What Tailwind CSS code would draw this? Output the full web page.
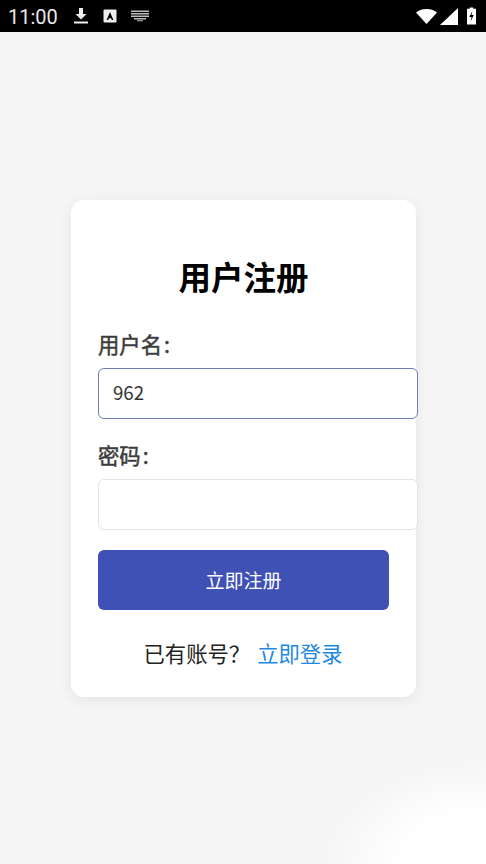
<!DOCTYPE html>
<html lang="zh-CN">
<head>
    <meta charset="UTF-8">
    <meta name="viewport" content="width=device-width, initial-scale=1.0">
    <title>用户注册</title>
    <script src="https://cdn.jsdelivr.net/npm/@tailwindcss/browser@4"></script>
</head>
<body class="font-['Noto_Sans_CJK_SC',sans-serif]">
    <div class="relative w-[486px] h-[864px] overflow-hidden bg-[#f5f5f5] flex flex-col">
        <!-- status bar -->
        <div class="h-8 shrink-0 bg-black flex items-center pl-[8px] pr-[10px] text-white">
            <span class="font-['Roboto',sans-serif] text-[20px] leading-none text-[#e8e8e8] w-[49px] mt-[1px]">11:00</span>
            <svg class="ml-[16px]" width="16" height="18" viewBox="0 0 16 18" fill="#eee"><path d="M6 1h4v6h3.500L8 12.500 2.500 7H6z"/><rect x="1" y="14.500" width="14" height="2"/></svg>
            <svg class="ml-[14px]" width="14" height="14" viewBox="0 0 14 14"><rect x="0.500" y="0.500" width="13" height="13" rx="1" fill="#eee"/><path d="M7 3 L10.400 11 H8.800 L8.100 9.200 H5.900 L5.200 11 H3.600 Z" fill="#000"/></svg>
            <svg class="ml-[14px]" width="18" height="12" viewBox="0 0 18 12" fill="#bbb"><path d="M0 .5h18v1.500H0zM0 3h18v1.500H0zM0 5.500h18v1.500H0zM3 8h12v1.500H3zM6 10.300h6v1H6z"/></svg>
            <div class="flex-1"></div>
            <svg width="21" height="15" viewBox="0 0 21 15" fill="#fff"><path d="M0 3.500C3 1 6.500 0 10.500 0S18 1 21 3.500L10.500 15z"/></svg>
            <svg class="ml-[3px]" width="18" height="17" viewBox="0 0 18 17" fill="#fff"><path d="M18 0v17H0z"/></svg>
            <svg class="ml-[9px]" width="9" height="18" viewBox="0 0 10 19"><path d="M3 0h4v1.500h3V19H0V1.500h3z" fill="#fff"/><path d="M6 4 2.500 10.500H5L4 15.500 7.500 8.500H5z" fill="#000"/></svg>
        </div>

        <!-- white glow, bottom right -->
        <div class="absolute right-0 bottom-0 w-[165px] h-[105px] bg-[radial-gradient(ellipse_farthest-side_at_100%_100%,#ffffff_50%,#f5f5f5_100%)]"></div>

        <!-- card -->
        <div class="relative z-10 mt-[168px] ml-[71px] w-[345px] h-[497px] bg-white rounded-[13px] shadow-[0_3px_14px_rgba(0,0,0,0.07)] px-[27px] pt-[50px]">
            <h1 class="text-[32.5px] leading-[52px] font-bold text-black text-center">用户注册</h1>
            <label class="block mt-[26px] text-[21.33px] leading-[32px] text-[#3c3c3c] [-webkit-text-stroke:0.5px_#3c3c3c]">用户名<span class="ml-[2px]">:</span></label>
            <input type="text" value="962" class="block mt-[8px] w-[320px] h-[51px] px-[14px] pb-[5px] rounded-[6px] border border-[#6f7fb5] bg-white text-[18.67px] text-[#333] outline-none">
            <label class="block mt-[20px] text-[21.33px] leading-[32px] text-[#3c3c3c] [-webkit-text-stroke:0.5px_#3c3c3c]">密码<span class="ml-[2px]">:</span></label>
            <input type="password" class="block mt-[8px] w-[320px] h-[51px] px-[14px] rounded-[6px] border border-[#e4e4e4] bg-white text-[18.67px] outline-none">
            <button class="block mt-[20px] w-[291px] h-[60px] rounded-[6px] bg-[#3f51b5] text-white text-[19px]">立即注册</button>
            <p class="mt-[24px] pr-[1px] text-center text-[21.33px] leading-[38px] text-[#222]">已有账号？<a class="text-[#1e88e5] ml-[7px]">立即登录</a></p>
        </div>
    </div>
</body>
</html>
